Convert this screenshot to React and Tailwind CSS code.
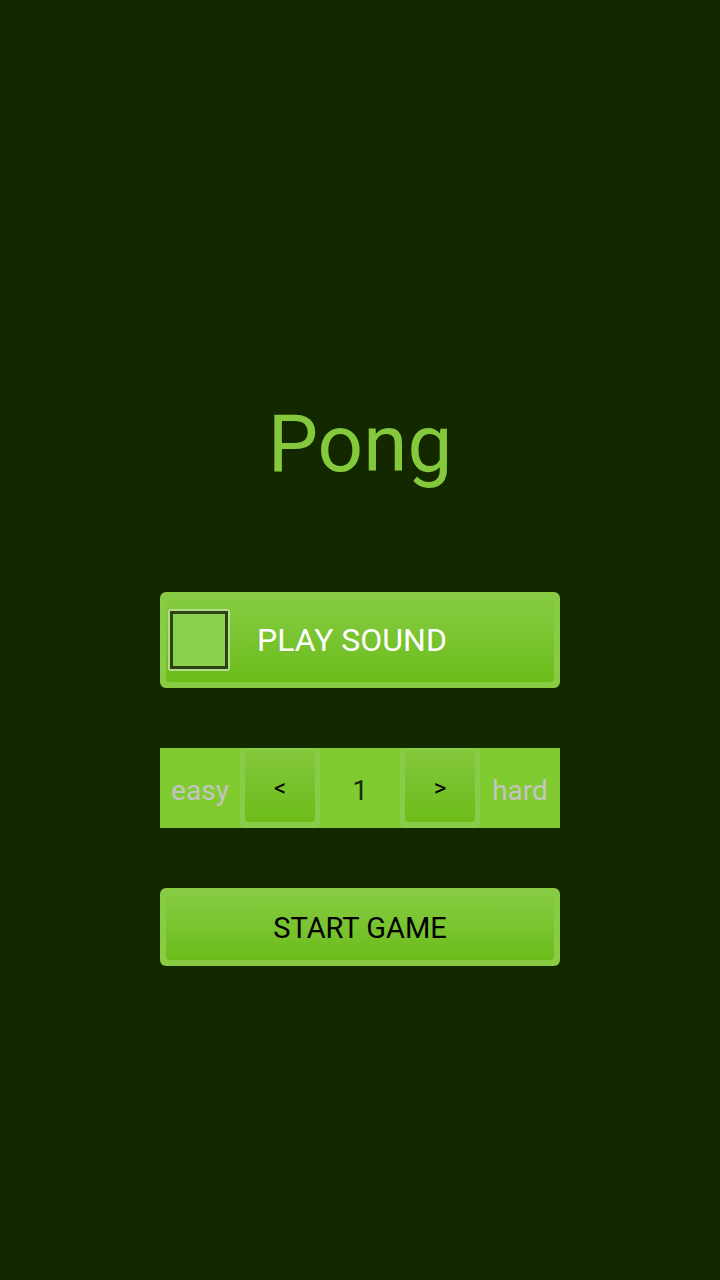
import React from "react";

function GreenButton({ className = "", children }) {
  return (
    <div className={`rounded-md bg-[#88cc44] p-[6px] ${className}`}>
      <div className="h-full rounded-sm bg-gradient-to-b from-[#86cb40] to-[#6cbc18] flex items-center">
        {children}
      </div>
    </div>
  );
}

function StepButton({ children }) {
  return (
    <div className="w-[80px] h-[80px] rounded-md bg-[#88cc48] p-[5px] pt-[2px] pb-[6px]">
      <div className="h-full pt-[3px] rounded-sm bg-gradient-to-b from-[#84c83c] to-[#6cbc18] flex items-center justify-center text-black text-[24px]">
        {children}
      </div>
    </div>
  );
}

export default function App() {
  return (
    <div
      className="w-[720px] h-[1280px] bg-[#142800] flex flex-col items-center"
      style={{ fontFamily: "Roboto, 'Liberation Sans', sans-serif" }}
    >
      <h1 className="mt-[394px] h-[100px] text-[80px] leading-[100px] text-[#84c83c]">Pong</h1>

      <GreenButton className="mt-[98px] w-[400px] h-[96px]">
        <div className="ml-[2px] w-[62px] h-[62px] rounded-[3px] border-[2px] border-[#b4dc8c] p-0">
          <div className="w-full h-full border-[3px] border-[#2c4412] bg-[#8cd050]" />
        </div>
        <span className="ml-[27px] text-white text-[32px]">PLAY SOUND</span>
      </GreenButton>

      <div className="mt-[60px] w-[400px] h-[80px] bg-[#80cc30] flex items-center">
        <span className="w-[80px] pt-[5px] text-center text-[#c4c4c4] text-[28px]">easy</span>
        <StepButton>&lt;</StepButton>
        <span className="w-[80px] pt-[5px] text-center text-[#1a2a08] text-[28px]">1</span>
        <StepButton>&gt;</StepButton>
        <span className="w-[80px] pt-[5px] text-center text-[#c4c4c4] text-[28px]">hard</span>
      </div>

      <GreenButton className="mt-[60px] w-[400px] h-[78px]">
        <span className="w-full pt-[4px] text-center text-black text-[29px]">START GAME</span>
      </GreenButton>
    </div>
  );
}
